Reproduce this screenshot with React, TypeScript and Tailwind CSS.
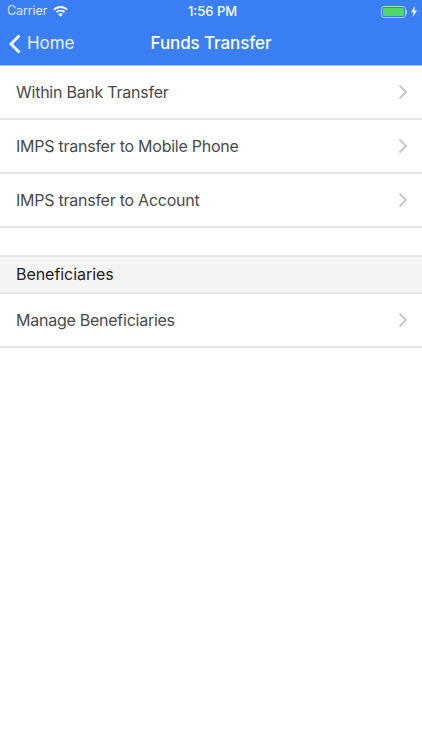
const font = { fontFamily: "Inter, 'Liberation Sans', sans-serif" };

function Chevron() {
  return (
    <svg width="10" height="16" viewBox="0 0 10 16" fill="none" className="shrink-0">
      <path d="M1.5 1.5 L8 8 L1.5 14.5" stroke="#c7c7cc" strokeWidth="2" />
    </svg>
  );
}

function Row({ label }: { label: string }) {
  return (
    <div className="flex h-[54px] items-center justify-between border-b-2 border-[#e6e6e6] pl-4 pr-[14px]">
      <span className="text-[16px] tracking-[-0.25px] text-[#4a4a4a]">{label}</span>
      <Chevron />
    </div>
  );
}

export default function App() {
  return (
    <div className="h-[750px] w-[422px] overflow-hidden bg-white" style={font}>
      <div className="h-[66px] border-b border-[#a9c8fa] bg-[#3a7ff5] text-white">
        <div className="flex h-[22px] items-center justify-between pl-[7px] pr-[5px] pt-[1px] text-[13px]">
          <div className="flex w-[120px] items-center gap-[6px]">
            <span className="text-[12.5px] tracking-[-0.1px] text-[#dbe8fd]">Carrier</span>
            <svg width="15" height="11" viewBox="0 0 15 11" fill="white">
              <path d="M7.5 0C4.7 0 2.2 1.1.3 3l1.3 1.4C3.1 2.9 5.2 2 7.5 2s4.4.9 5.9 2.4L14.7 3C12.8 1.1 10.3 0 7.5 0z" />
              <path d="M7.5 3.7c-1.8 0-3.4.7-4.6 1.9l1.3 1.4c.9-.9 2-1.4 3.3-1.4s2.4.5 3.3 1.4l1.3-1.4C10.9 4.4 9.3 3.7 7.5 3.7z" />
              <path d="M7.5 7.3c-.9 0-1.7.4-2.3 1l2.3 2.5 2.3-2.5c-.6-.6-1.4-1-2.3-1z" />
            </svg>
          </div>
          <span className="pl-[1px] font-medium">1:56 PM</span>
          <div className="flex w-[120px] items-center justify-end gap-[4px]">
            <div className="flex items-center">
              <div className="flex h-[12px] w-[25px] items-center rounded-[3px] border border-[#a8d8c0] p-[1px]">
                <div className="h-full w-full rounded-[1.5px] bg-[#4cd964]" />
              </div>
              <div className="h-[4px] w-[1px] bg-[#a8d8c0]" />
            </div>
            <svg width="6" height="11" viewBox="0 0 6 11" fill="white">
              <path d="M3.8 0 0 6.2h2.4L1.7 11 6 4.4H3.4z" />
            </svg>
          </div>
        </div>
        <div className="relative flex h-[43px] items-center justify-center">
          <div className="absolute left-[9px] top-0 flex h-full items-center gap-[6px]">
            <svg width="12" height="20" viewBox="0 0 12 20" fill="none">
              <path d="M10.5 1.5 L2 10 L10.5 18.5" stroke="white" strokeWidth="2.8" />
            </svg>
            <span className="text-[17px] tracking-[-0.1px] text-[#e8f0fe]">Home</span>
          </div>
          <span className="text-[17px] font-medium tracking-[-0.1px]">Funds Transfer</span>
        </div>
      </div>
      <Row label="Within Bank Transfer" />
      <Row label="IMPS transfer to Mobile Phone" />
      <Row label="IMPS transfer to Account" />
      <div className="h-[27px]" />
      <div className="flex h-[39px] items-center border-y-2 border-[#e6e6e6] bg-[#f4f4f4] pb-[1px] pl-4 text-[16px] tracking-[-0.05px] text-[#222222]">
        Beneficiaries
      </div>
      <Row label="Manage Beneficiaries" />
    </div>
  );
}
